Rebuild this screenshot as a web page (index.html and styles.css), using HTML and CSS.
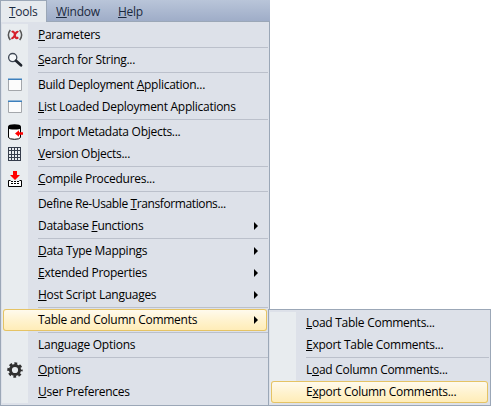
FILE: index.html
```
<!DOCTYPE html>
<html lang="en">
<head>
<meta charset="utf-8">
<title>Tools menu</title>
<link rel="stylesheet" href="styles.css">
</head>
<body>
<nav class="menubar">
  <span class="tab active"><u>T</u>ools</span>
  <span class="tab window"><u>W</u>indow</span>
  <span class="tab help"><u>H</u>elp</span>
</nav>
<div class="menu main">
  <div class="item"><svg class="icon" viewBox="0 0 16 16"><path d="M3.3 3Q-.6 8 3.3 13M12.7 3Q16.6 8 12.7 13" fill="none" stroke="#555" stroke-width="1.5"/><path d="M4.8 5.2Q6.5 3.7 7.3 6L8.4 10Q9.3 12.2 11.2 10.2M11.4 5Q9.8 4 8 7.6Q6.3 11.8 4.4 11" fill="none" stroke="#d51f2b" stroke-width="2"/></svg><span class="label"><u>P</u>arameters</span></div>
  <hr>
  <div class="item"><svg class="icon" viewBox="0 0 16 16"><circle cx="5.7" cy="5.6" r="4.1" fill="#f5f8fa" stroke="#3f4855" stroke-width="1.3"/><path d="M9 8.8L14 13.3" stroke="#20252d" stroke-width="2.8" stroke-linecap="round"/></svg><span class="label"><u>S</u>earch for String...</span></div>
  <hr>
  <div class="item"><svg class="icon" viewBox="0 0 16 16"><path d="M1.5 2.5h13v11h-13z" fill="#fcfcfc" stroke="#a4a7ab"/><path d="M1 1.5h14v1.5h-14z" fill="#3d80bd"/></svg><span class="label">Build Deployment <u>A</u>pplication...</span></div>
  <div class="item"><svg class="icon" viewBox="0 0 16 16"><path d="M1.5 2.5h13v11h-13z" fill="#fcfcfc" stroke="#a4a7ab"/><path d="M1 1.5h14v1.5h-14z" fill="#3d80bd"/></svg><span class="label"><u>L</u>ist Loaded Deployment Applications</span></div>
  <hr>
  <div class="item"><svg class="icon" viewBox="0 0 16 16"><path d="M1.5 3v10.5q1 1.8 6 1.8t6-1.8V3z" fill="#fff" stroke="#000"/><path d="M1 2.6Q1.5.2 7.5.2T14 2.6V4Q13 5.5 7.5 5.5T1 4z" fill="#000"/><path d="M8 9.5l4-3.3v2h4v2.6h-4v2z" fill="#f00"/></svg><span class="label"><u>I</u>mport Metadata Objects...</span></div>
  <div class="item"><svg class="icon" viewBox="0 0 16 16"><path d="M1 1h13v14H1z" fill="#353d4b"/><path d="M2 2h2v2H2zM5 2h2v2H5zM8 2h2v2H8zM11 2h2v2h-2zM2 5h2v3H2zM5 5h2v3H5zM8 5h2v3H8zM11 5h2v3h-2zM2 9h2v2H2zM5 9h2v2H5zM8 9h2v2H8zM11 9h2v2h-2zM2 12h2v2H2zM5 12h2v2H5zM8 12h2v2H8zM11 12h2v2h-2z" fill="#e8ecef"/></svg><span class="label"><u>V</u>ersion Objects...</span></div>
  <hr>
  <div class="item"><svg class="icon" viewBox="0 0 16 16"><path d="M1.5 9.5h13v6h-13z" fill="#fff"/><path d="M3.5 9.5h-2v6h13v-6h-2" fill="none" stroke="#000"/><path d="M4 10.5h9M4 12.5h9" stroke="#000" stroke-dasharray="2 1"/><path d="M6 0h4v4h3L8 9 3 4h3z" fill="#f00"/></svg><span class="label"><u>C</u>ompile Procedures...</span></div>
  <hr>
  <div class="item"><span class="label tight">Define Re-Usable <u>T</u>ransformations...</span></div>
  <div class="item sub"><span class="label">Database <u>F</u>unctions</span></div>
  <hr>
  <div class="item sub"><span class="label"><u>D</u>ata Type Mappings</span></div>
  <div class="item sub"><span class="label"><u>E</u>xtended Properties</span></div>
  <div class="item sub"><span class="label"><u>H</u>ost Script Languages</span></div>
  <hr>
  <div class="item sub selected"><span class="label">Table and Column Comments</span></div>
  <hr>
  <div class="item"><span class="label">Language Options</span></div>
  <hr>
  <div class="item"><svg class="icon" viewBox="0 0 16 16"><circle cx="8" cy="8" r="4.6" fill="none" stroke="#303030" stroke-width="3"/><circle cx="8" cy="8" r="6.5" fill="none" stroke="#303030" stroke-width="2.4" stroke-dasharray="2.8 2.305" stroke-dashoffset="1.4"/></svg><span class="label"><u>O</u>ptions</span></div>
  <div class="item"><span class="label"><u>U</u>ser Preferences</span></div>
</div>
<div class="menu flyout">
  <div class="item"><span class="label"><u>L</u>oad Table Comments...</span></div>
  <div class="item"><span class="label"><u>E</u>xport Table Comments...</span></div>
  <hr>
  <div class="item"><span class="label">L<u>o</u>ad Column Comments...</span></div>
  <div class="item selected"><span class="label">E<u>x</u>port Column Comments...</span></div>
</div>
</body>
</html>
```
FILE: styles.css
```
* { box-sizing: border-box; }
body {
  margin: 0;
  width: 491px;
  height: 406px;
  overflow: hidden;
  position: relative;
  background: #fff;
  color: #000;
  font: 12px/22px "Open Sans", "Noto Sans", sans-serif;
  letter-spacing: -0.27px;
}
u {
  text-decoration: underline;
  text-decoration-thickness: 1px;
  text-underline-offset: 1px;
  text-decoration-skip-ink: none;
}
.menubar {
  display: flex;
  width: 270px;
  height: 21px;
  background: linear-gradient(#b9c5d9, #9fadc8);
  color: #1b293e;
}
.tab { padding-left: 9px; line-height: 23px; }
.tab.active {
  width: 47px;
  padding-left: 8px;
  background: #e6eaee;
  border: solid #9ba7b7;
  border-width: 1px 1px 0;
  line-height: 21px;
  height: 22px;
  position: relative;
  z-index: 1;
}
.tab.window { width: 62px; }
.menu {
  background: linear-gradient(#e8ecef, #e8ecef) 1px 2px / 26px calc(100% - 4px) no-repeat #dde1e9;
  border: 1px solid #9ba7b7;
  padding: 2px 1px;
}
.main { width: 270px; height: 385px; }
.flyout {
  position: absolute;
  left: 268px;
  top: 309px;
  width: 223px;
  height: 97px;
}
.item {
  display: flex;
  align-items: center;
  position: relative;
  height: 22px;
  margin: 0 1px;
  padding-left: 35px;
  white-space: nowrap;
}
.label { line-height: 21px; align-self: flex-start; }
.tight { letter-spacing: -0.39px; }
.icon {
  width: 16px;
  height: 16px;
  margin: 0 15px 0 -31px;
  flex: none;
}
hr {
  height: 1px;
  margin: 1px 0 1px 36px;
  border: 0;
  background: #bbc0cb;
}
.selected {
  background: linear-gradient(#fffbf0, #fff3d0 50%, #ffecb5);
  box-shadow: inset 0 0 0 1px #e5c365;
  border-radius: 3px;
}
.sub::after {
  content: "";
  margin-left: auto;
  margin-right: 9px;
  border: solid transparent;
  border-width: 4px 0 4px 4px;
  border-left-color: #000;
}
```
